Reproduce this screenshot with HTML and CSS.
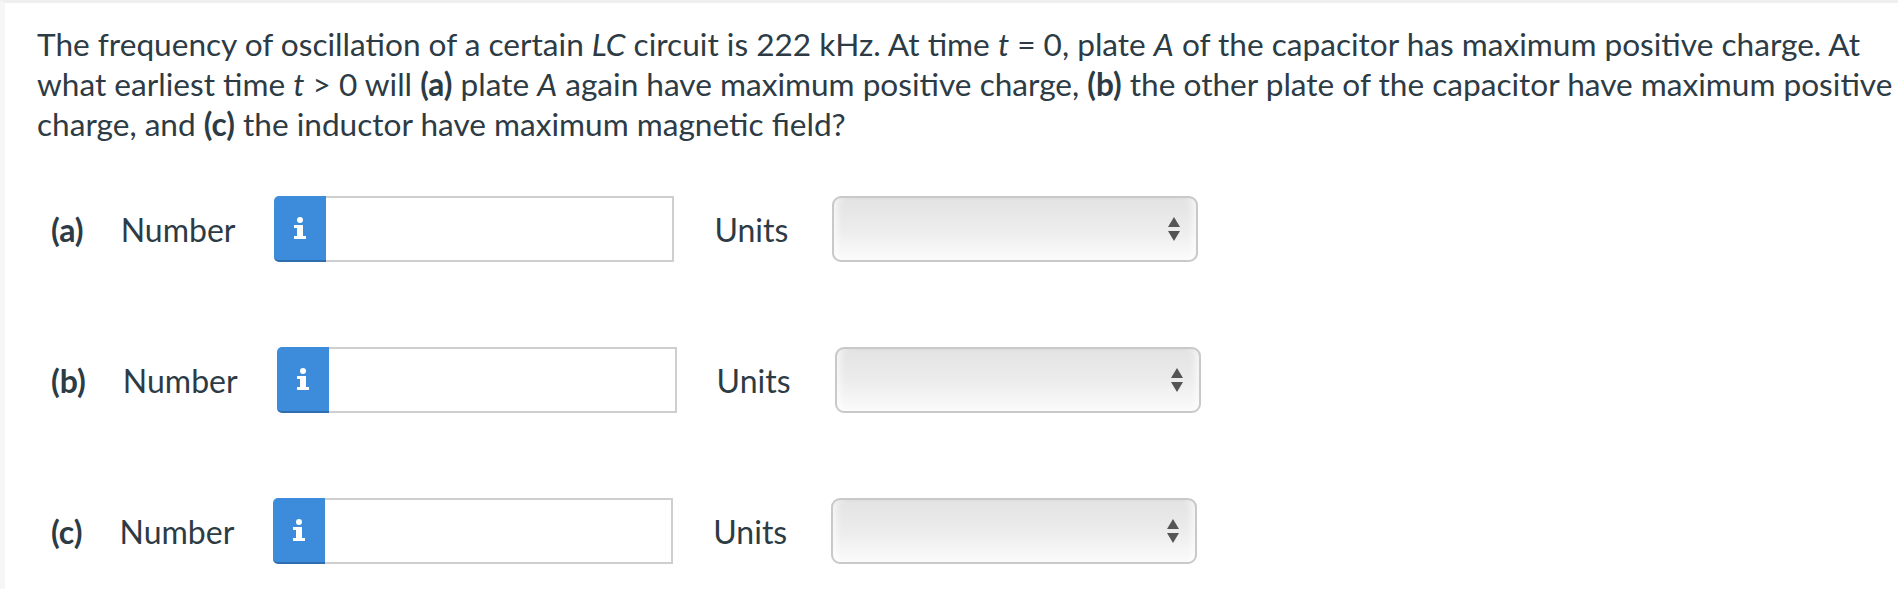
FILE: index.html
```html
<!DOCTYPE html>
<html>
<head>
<meta charset="utf-8">
<link rel="stylesheet" href="styles.css">
</head>
<body>
<div class="frame">
  <div class="question">
    <p class="stem">The frequency of oscillation of a certain <i>LC</i> circuit is 222 kHz. At time <i>t</i> = 0, plate <i>A</i> of the capacitor has maximum positive charge. At what earliest time <i>t</i> &gt; 0 will <b>(a)</b> plate <i>A</i> again have maximum positive charge, <b>(b)</b> the other plate of the capacitor have maximum positive charge, and <b>(c)</b> the inductor have maximum magnetic field?</p>
    <div class="parts">
      <div class="row">
        <span class="part">(a)</span>
        <span class="lbl">Number</span>
        <span class="info"><svg width="14" height="22" viewBox="0 0 14 22"><circle cx="7" cy="3" r="3" fill="#fff"/><path d="M1 8h9v11h3v3H1v-3h3v-8H1z" fill="#fff"/></svg></span>
        <span class="num"></span>
        <span class="lbl units">Units</span>
        <span class="sel"><svg class="arr" width="12" height="24" viewBox="0 0 12 24"><path d="M6 0L12 10H0z M0 14h12L6 24z" fill="#555"/></svg></span>
      </div>
      <div class="row">
        <span class="part">(b)</span>
        <span class="lbl">Number</span>
        <span class="info"><svg width="14" height="22" viewBox="0 0 14 22"><circle cx="7" cy="3" r="3" fill="#fff"/><path d="M1 8h9v11h3v3H1v-3h3v-8H1z" fill="#fff"/></svg></span>
        <span class="num"></span>
        <span class="lbl units">Units</span>
        <span class="sel"><svg class="arr" width="12" height="24" viewBox="0 0 12 24"><path d="M6 0L12 10H0z M0 14h12L6 24z" fill="#555"/></svg></span>
      </div>
      <div class="row">
        <span class="part">(c)</span>
        <span class="lbl">Number</span>
        <span class="info"><svg width="14" height="22" viewBox="0 0 14 22"><circle cx="7" cy="3" r="3" fill="#fff"/><path d="M1 8h9v11h3v3H1v-3h3v-8H1z" fill="#fff"/></svg></span>
        <span class="num"></span>
        <span class="lbl units">Units</span>
        <span class="sel"><svg class="arr" width="12" height="24" viewBox="0 0 12 24"><path d="M6 0L12 10H0z M0 14h12L6 24z" fill="#555"/></svg></span>
      </div>
    </div>
  </div>
</div>
</body>
</html>
```

FILE: styles.css
```css
html, body {
  margin: 0;
  padding: 0;
  background: #fff;
}
body {
  font-family: Lato, "Open Sans", sans-serif;
  color: #2d3b45;
}
.frame {
  border-top: 3px solid #efefef;
  border-left: 5px solid #f6f6f6;
  height: 589px;
  box-sizing: border-box;
}
.question {
  padding: 21px 4px 0 32px;
}
.stem {
  margin: 0;
  font-size: 31.6px;
  line-height: 40px;
}
.stem b {
  font-weight: 700;
}
.parts {
  margin-top: 52px;
  display: flex;
  flex-direction: column;
  gap: 85px;
}
.row {
  display: flex;
  align-items: center;
  height: 66px;
  padding-left: 14px;
  font-size: 32px;
}
.part {
  font-weight: 700;
  margin-right: 37px;
}
.lbl {
  margin-right: 39px;
}
.info {
  width: 52px;
  height: 66px;
  box-sizing: border-box;
  background: #3d8cdc;
  border-radius: 5px 0 0 5px;
  border-bottom: 2px solid #2f6eae;
  display: flex;
  align-items: center;
  justify-content: center;
}
.num {
  width: 348px;
  height: 66px;
  box-sizing: border-box;
  border: 2px solid #cfcfcf;
  border-left: none;
  background: #fff;
  margin-right: 40px;
}
.units {
  margin-right: 44px;
}
.sel {
  width: 366px;
  height: 66px;
  box-sizing: border-box;
  border: 2px solid #c9c9c9;
  border-radius: 9px;
  background: linear-gradient(#e3e3e3, #ececec 50%, #fbfbfb);
  box-shadow: inset 8px 0 8px -6px rgba(255,255,255,0.9), inset -8px 0 8px -6px rgba(255,255,255,0.9), inset 0 1px 2px rgba(0,0,0,0.05);
  display: flex;
  align-items: center;
  justify-content: flex-end;
  padding-right: 16px;
}
```
